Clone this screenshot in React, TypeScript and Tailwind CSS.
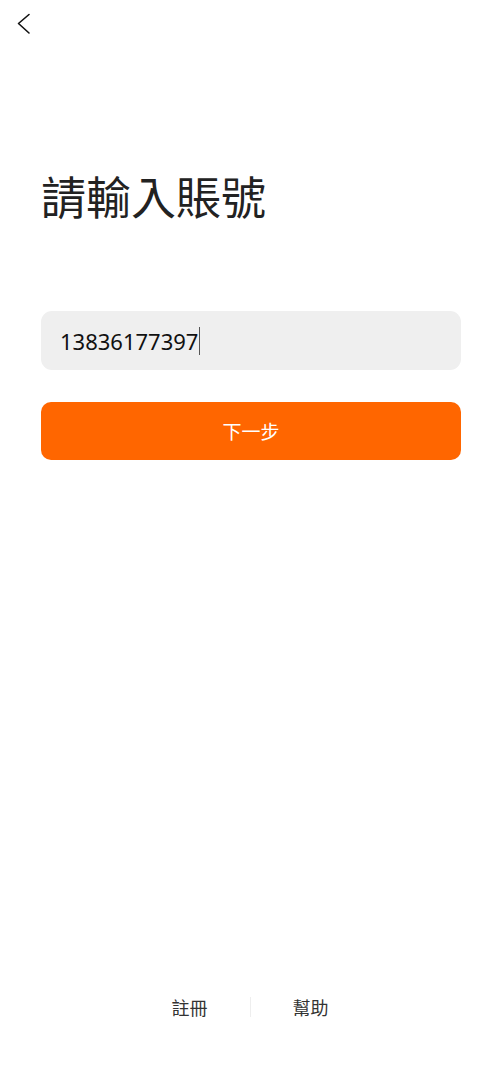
import React from "react";

export default function App() {
  const cjk = { fontFamily: '"Noto Sans CJK TC", "Noto Sans", sans-serif' };
  return (
    <div className="w-[495px] h-[1079px] bg-white flex flex-col" style={cjk}>
      <div className="h-[48px] flex items-start pt-[13px] pl-[15px]">
        <svg width="18" height="22" viewBox="0 0 18 22" fill="none">
          <path d="M14 1.5 L3.5 10.5 L14 20" stroke="#111" strokeWidth="1.6" strokeLinecap="round" strokeLinejoin="round" />
        </svg>
      </div>
      <div className="pl-[41px] pr-[34px] flex flex-col">
        <h1 className="mt-[125px] text-[45px] leading-none font-normal text-[#222]">請輸入賬號</h1>
        <div className="mt-[93px] h-[59px] rounded-[11px] bg-[#efefef] flex items-center pl-[19px]">
          <span className="text-[22px] text-[#111] leading-none" style={{ fontFamily: '"Noto Sans", sans-serif' }}>13836177397</span>
          <span className="ml-[1px] w-[1px] h-[28px] bg-[#555]" />
        </div>
        <button className="mt-[32px] h-[58px] rounded-[10px] bg-[#ff6600] text-white text-[19px] flex items-center justify-center">
          下一步
        </button>
      </div>
      <div className="flex-1" />
      <div className="h-[64px] flex items-start justify-center pl-[5px] mb-[18px]">
        <div className="flex items-center">
          <span className="w-[120px] text-center text-[18px] text-[#333] leading-none">註冊</span>
          <span className="w-[1px] h-[20px] bg-[#eeeeee]" />
          <span className="w-[120px] text-center text-[18px] text-[#333] leading-none">幫助</span>
        </div>
      </div>
    </div>
  );
}
